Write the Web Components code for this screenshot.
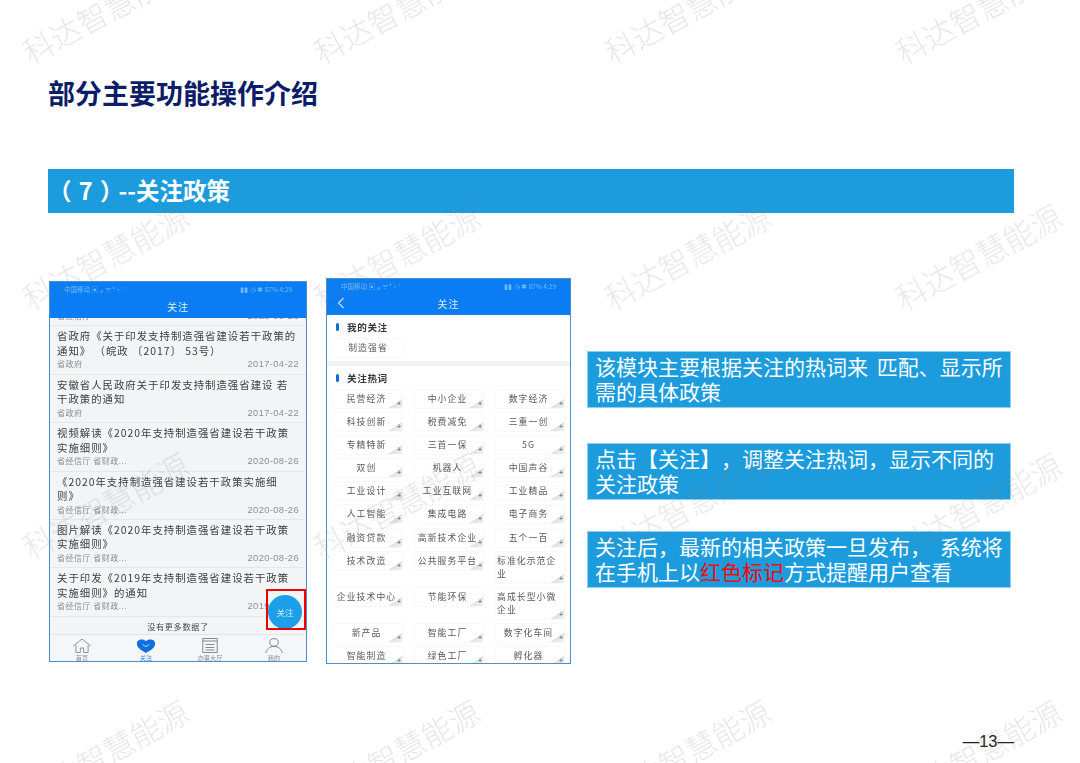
<!DOCTYPE html>
<html lang="zh">
<head>
<meta charset="utf-8">
<title>关注政策</title>
<style>
  html, body { margin: 0; height: 100%; background: #fff; }
  body { font-family: "Noto Sans CJK SC", "Liberation Sans", sans-serif; overflow: hidden; }
</style>
</head>
<body>
<slide-page>
  <slide-title>部分主要功能操作介绍</slide-title>
  <section-band>（ 7 ）<span style="margin-left:-5px">--关注政策</span></section-band>
  <div slot="left">
    <list-phone></list-phone>
  </div>
  <div slot="middle">
    <hot-phone></hot-phone>
  </div>
  <note-box slot="notes" style="margin-top:73px">该模块主要根据关注的热词来 匹配、显示所需的具体政策</note-box>
  <note-box slot="notes" style="margin-top:35px">点击【关注】，调整关注热词，显示不同的关注政策</note-box>
  <note-box slot="notes" style="margin-top:31px">关注后，最新的相关政策一旦发布， 系统将在手机上以<span style="color:#f40a0a">红色标记</span>方式提醒用户查看</note-box>
  <page-number slot="footer">—13—</page-number>
</slide-page>
<water-marks></water-marks>

<script>
const FONT = '"Noto Sans CJK SC", "Liberation Sans", sans-serif';

class SlidePage extends HTMLElement {
  constructor() {
    super();
    this.attachShadow({ mode: "open" });
    this.shadowRoot.innerHTML = `
      <style>
        :host { display: flex; flex-direction: column; width: 1080px; height: 763px; box-sizing: border-box; padding: 73px 66px 0 48px; font-family: ${FONT}; }
        .row { display: flex; margin-top: 65px; align-items: flex-start; }
        .left { margin: 3px 0 0 1px; }
        .middle { margin-left: 19px; }
        .notes { display: flex; flex-direction: column; margin-left: 16px; width: 424px; }
        .foot { display: flex; justify-content: flex-end; margin-top: 67px; }
      </style>
      <slot></slot>
      <div class="row">
        <div class="left"><slot name="left"></slot></div>
        <div class="middle"><slot name="middle"></slot></div>
        <div class="notes"><slot name="notes"></slot></div>
      </div>
      <div class="foot"><slot name="footer"></slot></div>
    `;
  }
}

class SlideTitle extends HTMLElement {
  constructor() {
    super();
    this.attachShadow({ mode: "open" });
    this.shadowRoot.innerHTML = `
      <style>
        :host { display: block; height: 40px; line-height: 40px; font-size: 27px; font-weight: 700; color: #0b1c68; }
      </style>
      <slot></slot>
    `;
  }
}

class SectionBand extends HTMLElement {
  constructor() {
    super();
    this.attachShadow({ mode: "open" });
    this.shadowRoot.innerHTML = `
      <style>
        :host { display: block; margin-top: 56px; height: 44px; line-height: 43px; background: #1c9cdc; color: #fff; font-size: 23.5px; font-weight: 700; white-space: nowrap; word-spacing: 2px; }
      </style>
      <slot></slot>
    `;
  }
}

class NoteBox extends HTMLElement {
  constructor() {
    super();
    this.attachShadow({ mode: "open" });
    this.shadowRoot.innerHTML = `
      <style>
        :host { display: block; box-sizing: border-box; height: 57px; padding: 3px 5px 0 8px; background: #1c9cdc; color: #fff; font-size: 21px; line-height: 25px; word-spacing: 4px; text-spacing-trim: space-all; box-shadow: 0 0 0 1px #8fd0f0 inset; }
      </style>
      <slot></slot>
    `;
  }
}

class PageNumber extends HTMLElement {
  constructor() {
    super();
    this.attachShadow({ mode: "open" });
    this.shadowRoot.innerHTML = `
      <style>
        :host { display: block; font-size: 16.5px; line-height: 20px; color: #222; font-family: "Liberation Sans", ${FONT}; }
      </style>
      <slot></slot>
    `;
  }
}

class PhoneStatus extends HTMLElement {
  constructor() {
    super();
    this.attachShadow({ mode: "open" });
    this.shadowRoot.innerHTML = `
      <style>
        :host { display: flex; justify-content: space-between; align-items: center; height: 14px; padding: 0 14px 0 14px; font-size: 6.5px; color: #6dbcff; white-space: nowrap; }
      </style>
      <span>中国移动 ▣ ₄ₗ ᯤ ⁴·⁷</span><span>▮▮ ◷ ✱ 87% 4:29</span>
    `;
  }
}

class PhoneHeader extends HTMLElement {
  constructor() {
    super();
    this.attachShadow({ mode: "open" });
    this.shadowRoot.innerHTML = `
      <style>
        :host { display: block; position: relative; height: 36px; background: #0a7df5; }
        .title { height: 21px; line-height: 21px; text-align: center; color: #dcefff; font-size: 10px; letter-spacing: 1px; }
        svg { position: absolute; left: 10px; top: 18px; }
      </style>
      <phone-status></phone-status>
      <div class="title">关注</div>
      ${this.hasAttribute("back") ? '<svg width="8" height="12" viewBox="0 0 8 12"><path d="M6.5 1 1.5 6l5 5" fill="none" stroke="#cfe6ff" stroke-width="1.1"/></svg>' : ""}
    `;
  }
}

class PolicyItem extends HTMLElement {
  constructor() {
    super();
    this.attachShadow({ mode: "open" });
    const from = this.getAttribute("from") || "";
    const date = this.getAttribute("date") || "";
    this.shadowRoot.innerHTML = `
      <style>
        :host { display: block; box-sizing: border-box; height: 48.4px; padding: 3px 7px 0 7px; border-bottom: 1px solid #e3e6ea; }
        .t { font-size: 10.4px; line-height: 14.4px; letter-spacing: 1px; color: #3a3d42; height: 28px; }
        .m { display: flex; justify-content: space-between; font-size: 8px; line-height: 13px; letter-spacing: .5px; color: #8b8f94; }
        .d { font-family: "Liberation Sans", sans-serif; font-size: 9.4px; letter-spacing: .35px; }
      </style>
      <div class="t"><slot></slot></div>
      <div class="m"><span>${from}</span><span class="d">${date}</span></div>
    `;
  }
}

class TabItem extends HTMLElement {
  constructor() {
    super();
    this.attachShadow({ mode: "open" });
    const icons = {
      home: '<path d="M1 9 9 2l8 7M3.5 8v7.5h4V11h3v4.5h4V8" fill="none" stroke="#7d8187" stroke-width=".8"/>',
      heart: '<path d="M9 16C4 13 .8 10.5.8 6.6 .8 4 3 2.6 5 2.6c1.7 0 3 .7 4 1.6 1-.9 2.3-1.6 4-1.6 2 0 4.2 1.4 4.2 4 0 3.9-3.2 6.4-8.2 9.4z" fill="#0f6fe0"/><path d="M6 7.5l3 2.2 3-2.2" fill="none" stroke="#cfe6ff" stroke-width=".8"/>',
      doc: '<path d="M2.5 1.5h13v14h-13zM2.5 4h13M5 7.5h8M5 10.5h8M5 13h8" fill="none" stroke="#6f7379" stroke-width=".8"/>',
      user: '<path d="M9 1.6a3.8 3.8 0 1 1 0 7.6 3.8 3.8 0 0 1 0-7.6zM1.6 16c.6-3.8 3.6-6.6 7.4-6.6s6.8 2.8 7.4 6.6" fill="none" stroke="#6f7379" stroke-width=".8"/>'
    };
    const on = this.hasAttribute("on");
    this.shadowRoot.innerHTML = `
      <style>
        :host { display: flex; flex-direction: column; align-items: center; flex: 1; font-size: 6.2px; line-height: 7px; color: ${on ? "#3f8fe6" : "#8b8f94"}; }
        svg { display: block; margin-top: 2px; }
      </style>
      <svg width="20" height="17" viewBox="0 0 18 17" preserveAspectRatio="none">${icons[this.getAttribute("icon")]}</svg>
      <slot></slot>
    `;
  }
}

class ListPhone extends HTMLElement {
  constructor() {
    super();
    this.attachShadow({ mode: "open" });
    this.shadowRoot.innerHTML = `
      <style>
        :host { display: block; position: relative; box-sizing: border-box; width: 258px; height: 381px; border: 1px solid #4a90d0; background: #f2f4f6; }
        .screen { display: flex; flex-direction: column; height: 100%; filter: blur(.55px); }
        .list { flex: 1; min-height: 0; overflow: hidden; }
        .cut { margin-top: -40px; }
        .indent { padding-left: 10px; }
        .more { height: 18px; line-height: 18px; text-align: center; font-size: 8.2px; letter-spacing: .6px; color: #44474b; }
        .tabs { display: flex; height: 26px; border-top: 1px solid #e2e4e7; background: #f5f6f7; }
        .fab { position: absolute; left: 218px; top: 313px; width: 34px; height: 34px; border-radius: 50%; background: #1b9fe8; color: #cfeaff; text-align: center; font-size: 8.5px; line-height: 34px; filter: blur(.4px); }
        .mark { position: absolute; left: 216px; top: 307px; width: 40px; height: 41px; box-sizing: border-box; border: 2px solid #ee0000; }
      </style>
      <div class="screen">
        <phone-header></phone-header>
        <div class="list">
          <policy-item class="cut" from="省经信厅" date="2020-08-26"></policy-item>
          <policy-item from="省政府" date="2017-04-22">省政府《关于印发支持制造强省建设若干政策的通知》 （皖政 〔2017〕 53号）</policy-item>
          <policy-item from="省政府" date="2017-04-22">安徽省人民政府关于印发支持制造强省建设 若干政策的通知</policy-item>
          <policy-item from="省经信厅 省财政..." date="2020-08-26">视频解读《2020年支持制造强省建设若干政策实施细则》</policy-item>
          <policy-item from="省经信厅 省财政..." date="2020-08-26">《2020年支持制造强省建设若干政策实施细<br>则》</policy-item>
          <policy-item from="省经信厅 省财政..." date="2020-08-26">图片解读《2020年支持制造强省建设若干政策实施细则》</policy-item>
          <policy-item from="省经信厅 省财政..." date="2019-09-03">关于印发《2019年支持制造强省建设若干政策实施细则》的通知</policy-item>
          <div class="more">没有更多数据了</div>
        </div>
        <div class="tabs">
          <tab-item icon="home">首页</tab-item>
          <tab-item icon="heart" on>关注</tab-item>
          <tab-item icon="doc">办事大厅</tab-item>
          <tab-item icon="user">我的</tab-item>
        </div>
      </div>
      <div class="fab">关注</div>
      <div class="mark"></div>
    `;
  }
}

class WordChip extends HTMLElement {
  constructor() {
    super();
    this.attachShadow({ mode: "open" });
    this.shadowRoot.innerHTML = `
      <style>
        :host { display: block; position: relative; box-sizing: border-box; min-height: 18px; padding: 2px 3px 2px 0; background: #fff; box-shadow: 0 0 2px #e8eaec; font-size: 8.8px; line-height: 13px; letter-spacing: 1.1px; color: #55585c; text-align: center; }
        :host([wrap]) { text-align: left; padding: 2px 1px 3px 1px; }
        :host([plain]) { padding-right: 0; }
        :host([plain]) .tri, :host([plain]) .plus { display: none; }
        .tri { position: absolute; right: 0; bottom: 0; width: 14px; height: 9px; background: linear-gradient(to bottom right, transparent 50%, #dfe1e3 51%, #f0f1f2); }
        .plus { position: absolute; right: 1px; bottom: 0; font-size: 7px; line-height: 8px; letter-spacing: 0; color: #4a4d50; font-family: "Liberation Sans", sans-serif; }
      </style>
      <slot></slot><span class="tri"></span><span class="plus">+</span>
    `;
  }
}

class SubHead extends HTMLElement {
  constructor() {
    super();
    this.attachShadow({ mode: "open" });
    this.shadowRoot.innerHTML = `
      <style>
        :host { display: flex; align-items: center; gap: 8px; height: 14px; margin-left: 2px; font-size: 9.6px; font-weight: 700; letter-spacing: .6px; color: #33363a; }
        i { width: 3px; height: 8px; border-radius: 1.5px; background: #0f6fd0; }
      </style>
      <i></i><slot></slot>
    `;
  }
}

class HotPhone extends HTMLElement {
  constructor() {
    super();
    this.attachShadow({ mode: "open" });
    const rows = [
      "民营经济", "中小企业", "数字经济",
      "科技创新", "税费减免", "三重一创",
      "专精特新", "三首一保", "5G",
      "双创", "机器人", "中国声谷",
      "工业设计", "工业互联网", "工业精品",
      "人工智能", "集成电路", "电子商务",
      "融资贷款", "高新技术企业", "五个一百",
      "技术改造", "公共服务平台", "标准化示范企业",
      "企业技术中心", "节能环保", "高成长型小微企业",
      "新产品", "智能工厂", "数字化车间",
      "智能制造", "绿色工厂", "孵化器"
    ];
    const chips = rows.map(w => `<word-chip${w.length > 6 ? " wrap" : ""}>${w}</word-chip>`).join("");
    this.shadowRoot.innerHTML = `
      <style>
        :host { display: block; box-sizing: border-box; width: 245px; height: 386px; border: 1px solid #4a90d0; background: #fff; overflow: hidden; }
        .screen { filter: blur(.55px); }
        .top { padding: 5px 6px 4px 7px; }
        .mine { width: 68px; margin-top: 5px; }
        .gap { height: 5px; background: #f1f2f3; }
        .hot { padding: 5px 6px 0 7px; }
        .grid { display: grid; grid-template-columns: repeat(3, 68px); column-gap: 13px; row-gap: 5.1px; margin-top: 5px; align-items: start; }
      </style>
      <div class="screen">
        <phone-header back></phone-header>
        <div class="top">
          <sub-head>我的关注</sub-head>
          <word-chip class="mine" plain>制造强省</word-chip>
        </div>
        <div class="gap"></div>
        <div class="hot">
          <sub-head>关注热词</sub-head>
          <div class="grid">${chips}</div>
        </div>
      </div>
    `;
  }
}

class WaterMarks extends HTMLElement {
  constructor() {
    super();
    this.attachShadow({ mode: "open" });
    let marks = "";
    for (const y of [10, 256, 505, 752]) {
      for (const x of [105, 396, 687, 978]) {
        marks += `<span style="left:${x}px;top:${y}px">科达智慧能源</span>`;
      }
    }
    this.shadowRoot.innerHTML = `
      <style>
        :host { display: block; position: absolute; left: 0; top: 0; width: 1080px; height: 763px; overflow: hidden; pointer-events: none; }
        span { position: absolute; transform: translate(-50%, -50%) rotate(-28.5deg); font-size: 30.5px; font-weight: 300; line-height: 40px; white-space: nowrap; color: rgba(120,120,120,.18); }
      </style>
      ${marks}
    `;
  }
}

customElements.define("phone-status", PhoneStatus);
customElements.define("phone-header", PhoneHeader);
customElements.define("policy-item", PolicyItem);
customElements.define("tab-item", TabItem);
customElements.define("word-chip", WordChip);
customElements.define("sub-head", SubHead);
customElements.define("list-phone", ListPhone);
customElements.define("hot-phone", HotPhone);
customElements.define("slide-title", SlideTitle);
customElements.define("section-band", SectionBand);
customElements.define("note-box", NoteBox);
customElements.define("page-number", PageNumber);
customElements.define("water-marks", WaterMarks);
customElements.define("slide-page", SlidePage);
</script>
</body>
</html>
